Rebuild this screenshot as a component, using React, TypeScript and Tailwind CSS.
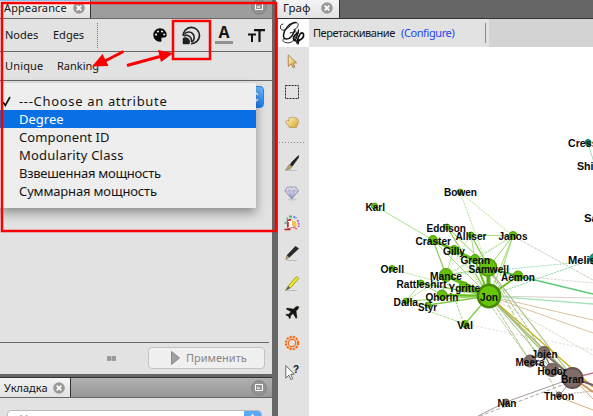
import React from 'react';

type NodeSpec = [string, number, number, number, number, number, number];

// name, node x, node y, radius, label x, label baseline, label width
const green: NodeSpec[] = [
  ['Bowen', 460, 192, 3.5, 444, 196, 33],
  ['Karl', 374.5, 206, 3.5, 365.5, 210.5, 19.5],
  ['Eddison', 447, 227, 3.5, 426.5, 231.5, 39.5],
  ['Alliser', 471, 235, 3.5, 455.5, 240, 31],
  ['Craster', 433, 240, 5, 415.5, 245, 35.5],
  ['Janos', 513, 235.5, 4.5, 498.5, 240, 29],
  ['Gilly', 454, 250, 5, 443, 255, 22],
  ['Grenn', 475, 259, 5, 460.5, 264, 29.5],
  ['Samwell', 488, 267.5, 9, 468.5, 272.5, 40.5],
  ['Orell', 392, 268.5, 3.5, 380.5, 273, 23.5],
  ['Mance', 446, 275, 7, 430, 280, 32],
  ['Rattleshirt', 421, 283, 3.5, 396.5, 288, 50],
  ['Ygritte', 464, 287, 5.5, 448.5, 292, 31.5],
  ['Aemon', 518, 276, 5.5, 501, 281, 34],
  ['Qhorin', 442, 295, 5.5, 425.5, 300.5, 33],
  ['Jon', 489, 296, 12, 480, 301, 18],
  ['Dalla', 406, 301, 3.5, 393.5, 306, 24.5],
  ['Styr', 428, 305, 3.5, 418, 311, 19],
  ['Val', 465, 324, 4, 457, 329, 16],
];

const brown: NodeSpec[] = [
  ['Jojen', 544, 352, 6, 531.5, 357.5, 26],
  ['Meera', 530, 361, 6.5, 515.5, 366, 29],
  ['Hodor', 552, 370, 7, 537.5, 374.5, 29],
  ['Bran', 572.5, 378, 10.5, 561, 383, 23],
  ['Theon', 559, 395, 3.5, 544, 400, 30],
  ['Nan', 506, 402, 3.5, 497.5, 407, 19],
];

const teal: NodeSpec[] = [
  ['Cressen', 588, 142.5, 3.5, 568, 147, 42],
  ['Shireen', 604, 165, 3, 577, 169.5, 39],
  ['Salladhor', 610, 218, 3, 584, 222, 52],
  ['Melisandre', 595, 259, 6, 568, 264, 58],
];

// x1, y1, x2, y2, colour, width, dash
const edges: [number, number, number, number, string, number, string?][] = [
  [460, 192, 513, 236, '#b5e78d', 1, '2 1'],
  [460, 192, 488, 268, '#b5e78d', 1, '2 1'],
  [375, 206, 433, 240, '#b0e385', 1],
  [447, 227, 489, 296, '#8fd354', 1.3],
  [447, 227, 489, 268, '#8fd354', 1],
  [471, 235, 489, 268, '#80c944', 1.2],
  [471, 235, 513, 236, '#a5dd7b', 1],
  [471, 235, 475, 260, '#a5dd7b', 1],
  [471, 235, 446, 275, '#c5e8ab', 1, '2 1'],
  [433, 240, 475, 260, '#62bb14', 3],
  [433, 240, 446, 275, '#8ed25a', 1.3],
  [433, 240, 489, 296, '#a3dc78', 1],
  [454, 250, 488, 268, '#66bd1c', 2.3],
  [454, 250, 446, 275, '#b2e18c', 1],
  [454, 250, 489, 296, '#a3dc78', 1, '2 1'],
  [475, 260, 489, 296, '#69bf1d', 2],
  [475, 260, 446, 275, '#b2e18c', 1, '2 1'],
  [475, 260, 513, 236, '#b2e18c', 1, '2 1'],
  [513, 236, 488, 268, '#9ad770', 1],
  [513, 236, 500, 276, '#9ad770', 1],
  [513, 236, 489, 296, '#a3dc78', 1],
  [513, 236, 446, 275, '#c5e8ab', 1, '2 1'],
  [513, 236, 593, 280, '#cfcab7', 1, '3 1'],
  [392, 269, 489, 296, '#b2e18c', 1, '2 1'],
  [446, 275, 488, 268, '#a3dc78', 1],
  [446, 275, 489, 296, '#64bb15', 4],
  [446, 275, 464, 324, '#a3dc78', 1, '3 1'],
  [446, 275, 442, 295, '#9ad770', 1],
  [446, 275, 406, 301, '#a3dc78', 1, '2 1'],
  [421, 283, 489, 296, '#84cc4b', 1.5],
  [421, 283, 442, 295, '#9ad770', 1],
  [464, 287, 489, 296, '#65bd17', 3],
  [442, 295, 489, 296, '#67bf1b', 2.3],
  [406, 301, 489, 296, '#8fd354', 1],
  [428, 305, 489, 296, '#80c944', 1.3],
  [406, 301, 428, 305, '#a3dc78', 1],
  [428, 311, 465, 324, '#a3dc78', 1, '3 1'],
  [465, 324, 489, 296, '#80cc47', 1.3],
  [421, 283, 406, 301, '#a3dc78', 1],
  [488, 268, 489, 296, '#55af0d', 4],
  [518, 276, 489, 296, '#69bf1d', 2],
  [488, 268, 518, 276, '#52b843', 2],
  [446, 275, 593, 261, '#9fdeb9', 1, '2 1'],
  [489, 296, 593, 259, '#82d9a2', 1, '2 1'],
  [518, 276, 593, 294, '#5bca73', 1.4],
  [518, 276, 593, 283, '#ddd9cd', 1, '3 1'],
  [489, 296, 593, 298, '#d7d1c5', 1],
  [489, 296, 593, 304, '#a7e4b8', 1.3],
  [489, 296, 593, 320, '#ddc2a1', 1],
  [489, 296, 593, 333, '#ddc2a1', 1],
  [489, 296, 593, 355, '#ddd9c6', 1, '3 1'],
  [465, 324, 593, 350, '#dbdad5', 1, '2 2'],
  [488, 268, 573, 378, '#a7bb83', 1.2],
  [488, 268, 544, 353, '#a3b980', 1, '3 1'],
  [489, 296, 573, 378, '#a6b878', 1.5],
  [489, 296, 552, 370, '#a3b980', 1],
  [489, 296, 544, 353, '#a3bd7a', 1.2],
  [489, 296, 530, 361, '#a3c180', 1, '4 1'],
  [488, 268, 559, 396, '#a4c97d', 1, '5 2'],
  [484, 296, 530, 361, '#b0c98c', 1, '4 1'],
  [489, 296, 593, 387, '#c4b323', 1.5],
  [544, 353, 552, 370, '#806c65', 1.3],
  [544, 353, 573, 378, '#7b6b67', 2],
  [544, 353, 530, 361, '#806c65', 1],
  [530, 361, 573, 378, '#806c65', 1.5],
  [530, 361, 552, 370, '#806c65', 1.5],
  [552, 370, 573, 378, '#79655f', 3],
  [573, 378, 559, 396, '#ab9e98', 1],
  [573, 378, 506, 402, '#a39b98', 1],
  [506, 402, 478, 416, '#a39b98', 1],
  [573, 381, 480, 416, '#b2aaa7', 1, '4 2'],
  [559, 395, 593, 391, '#b6afac', 1, '2 1'],
  [559, 397, 593, 410, '#d9ad7a', 1],
  [573, 378, 593, 373, '#c77788', 1.3],
  [573, 378, 593, 385, '#7c526a', 2],
  [573, 378, 593, 392, '#d49557', 2],
  [573, 378, 593, 399, '#d9a675', 1],
  [588, 143, 595, 166, '#9edfc2', 1],
];

function Group({ nodes, fill, stroke }: { nodes: NodeSpec[]; fill: string; stroke: string }) {
  return (
    <g>
      {nodes.map(([n, x, y, r]) => (
        <circle key={n} cx={x} cy={y} r={r - 0.5} fill={fill} stroke={stroke} strokeWidth={r > 8 ? 1.8 : 1} />
      ))}
    </g>
  );
}

function Graph() {
  return (
    <svg className="block" width="284" height="369" viewBox="309 47 284 369">
      {edges.map(([a, b, c, d, col, w, dash], i) => (
        <line key={i} x1={a} y1={b} x2={c} y2={d} stroke={col} strokeWidth={w} strokeDasharray={dash} />
      ))}
      <Group nodes={green} fill="#66c00a" stroke="#55a00c" />
      <circle cx="489" cy="296" r="11" fill="#66c70a" stroke="#458509" strokeWidth="2" />
      <Group nodes={brown} fill="#806c69" stroke="#645350" />
      <Group nodes={teal} fill="#159b78" stroke="#0c7d60" />
      <g fontFamily="'Liberation Sans', Arial, sans-serif" fontWeight="700" fontSize="11.2" fill="#080808">
        {[...green, ...brown, ...teal].map(([n, , , , x, y, w]) => (
          <text key={n} x={x} y={y} textLength={w} lengthAdjust="spacingAndGlyphs">{n}</text>
        ))}
      </g>
    </svg>
  );
}

function Close() {
  return (
    <svg width="12" height="12" viewBox="0 0 12 12">
      <circle cx="6" cy="6" r="5.8" fill="#999" />
      <path d="M3.7 3.7l4.6 4.6M8.3 3.7L3.7 8.3" stroke="#fff" strokeWidth="1.8" />
    </svg>
  );
}

function Minimize() {
  return (
    <svg width="16" height="16" viewBox="0 0 16 16">
      <circle cx="8" cy="8" r="7.3" fill="#939393" stroke="#818181" />
      <path d="M4.5 4.5h7v6h-7z" fill="none" stroke="#fff" />
      <path d="M6 8h3" stroke="#fff" strokeWidth="1.3" />
    </svg>
  );
}

function Palette() {
  return (
    <svg width="14" height="14" viewBox="0 0 14 14">
      <path d="M7 .3C3.300.3.3 3.300.3 7s3 6.700 6.700 6.700c1.300 0 1.800-.8 1.500-1.800-.5-1.400.1-2.300 1.400-2.300h1.600c1.300 0 2.200-1 2.200-2.500C13.700 3.200 10.700.3 7 .3z" fill="#080808" />
      <g fill="#e2e2e2"><circle cx="3" cy="6.700" r="1.100" /><circle cx="5" cy="3.500" r="1.100" /><circle cx="9" cy="3.500" r="1.100" /><circle cx="11.200" cy="6.500" r="1.100" /></g>
    </svg>
  );
}

function SizeIcon() {
  return (
    <svg width="19" height="19" viewBox="0 0 19 19" fill="none" stroke="#222">
      <path d="M1.300 10A8.100 8.100 0 1 1 9 17.600" strokeWidth="1.700" />
      <path d="M2.500 8.200A5.400 5.400 0 1 1 10 15.800" strokeWidth="1.600" />
      <path d="M2 10.200C5.500 7.800 10.500 11 9.300 16" strokeWidth="1.500" />
      <path d="M.700 17.500V13C.7 11.400 3 11 4.800 11.600 7 12.300 8 14 8 16.200c0 1.500-.8 2-1.800 2H1.500c-.5 0-.8-.2-.8-.7z" fill="#222" stroke="none" />
    </svg>
  );
}

function GephiLogo() {
  return (
    <svg className="h-7 w-[31px] shrink-0 bg-white" viewBox="0 0 31 28" fill="none" stroke="#111" strokeLinecap="round">
      <path d="M5 5C1 5 1.500 12 6 11c5-1 8-8 12-7.500 4 .5 2 6.500-2 7" strokeWidth=".9" />
      <path d="M18 3.500C11 3.500 6 11 5.500 16c-.3 5.500 5 5 8.500 1l3-6" strokeWidth="1.500" />
      <path d="M12 14c5-1 8-3 6.500 2-1.500 6-6.500 9-11 7.500-3.500-1-3.500-4-.5-4" strokeWidth=".9" />
      <path d="M20 14c-5 2-6 8-2 8 5 0 8.500-4 7.500-7-1.500-3-5 0-6.500 9" strokeWidth="1.700" />
      <path d="M20.500 11c-1 6-2.500 11-4.500 10M21 21l-1 4" strokeWidth="1.300" />
    </svg>
  );
}

const arrowShape = 'M2 1l9.500 8.200-4 .2 2.200 4-2 1-2.200-4.200L2 13z';

function Tools() {
  return (
    <svg className="block" width="31" height="369" viewBox="278 47 31 369">
      <defs>
        <linearGradient id="gold" x1="0" y1="0" x2="1" y2="1"><stop stopColor="#fff5c4" /><stop offset="1" stopColor="#d6a530" /></linearGradient>
        <linearGradient id="gem" x1="0" y1="0" x2="0" y2="1"><stop stopColor="#f5f5fd" /><stop offset="1" stopColor="#9798c5" /></linearGradient>
      </defs>
      <path transform="translate(286.500 54) scale(.87 .96)" d={arrowShape} fill="url(#gold)" stroke="#a17632" strokeWidth=".9" />
      <rect x="285.500" y="85.500" width="13" height="13" fill="none" stroke="#222" strokeDasharray="2 1" />
      <path d="M288.500 119.500c.2-2.500 2-2.500 2.700-1.300.5-1.500 2.500-1.500 3 0 .8-1 2.400-.5 2.500.8 1.300-.2 1.900.8 1.700 2l-.5 3-1.700 3.500h-7l-1-2.300-2.200-2c-1-1.600.2-3.300 2.500-2.200z" fill="url(#gold)" stroke="#a58240" strokeWidth=".8" strokeDasharray="1.500 .5" />
      <path d="M279 142.500h26" stroke="#888" strokeDasharray="1 2" />
      <g>
        <path d="M285 170.500h12" stroke="#bebebe" />
        <path d="M298.500 155.500l-7 7-1.500 3 2 1 6.500-9z" fill="#222" stroke="#222" strokeWidth=".7" />
        <path d="M289.500 164.500l2.500 2c-1 3-4 3-6.500 3.500 2-2 2-4 4-5.500z" fill="#b6a26a" stroke="#837249" strokeWidth=".5" />
      </g>
      <ellipse cx="292" cy="199.500" rx="4" ry="1" fill="#c8c8c8" />
      <path d="M287.500 187h8l3 4-6.800 8-6.800-8z" fill="url(#gem)" stroke="#8686a8" strokeWidth=".8" />
      <path d="M285 191h13.500M287.500 187l2 4 2.200 8 2.500-8 1.800-4M289.500 191l2-4 2.700 4" fill="none" stroke="#8c8ca8" strokeWidth=".5" />
      <g>
        <g fill="none" strokeWidth="2">
          <path d="M285.500 224v-3M286.500 219l1.500-1.500" stroke="#5fbfb0" strokeDasharray="2 .7" />
          <path d="M289 216.500h3" stroke="#3fba68" />
          <path d="M293.500 216.500l3 2" stroke="#5a84e8" strokeDasharray="2 .7" />
          <path d="M297.500 220l1 4v3" stroke="#b15ed2" strokeDasharray="2 .8" />
        </g>
        <path d="M287 221l5-2 1 8-5 2z" fill="#fff" stroke="#ad3030" strokeWidth=".8" />
        <path d="M284.500 229.500h6M287 220.500l5-1M288 222v5" stroke="#c22020" strokeWidth="1.500" />
        <path d="M291.500 219.500l5 1.500 1 5-3.500 2.500-2.500-3z" fill="#efc553" stroke="#fff" />
        <path d="M293 227l4 2" stroke="#e86a94" strokeWidth="1.500" />
      </g>
      <path d="M287 260.500h10M287 290.500h10" stroke="#bdbdbd" />
      <path d="M285.500 260l1.500-5 8.500-9 3.500 2.500-9.500 9z" fill="#292929" />
      <path d="M285.500 260l1.500-4.500 2.500 2z" fill="#bd9b71" />
      <path d="M285.500 290.500l3-5 8-9 2.300 2-8 9z" fill="#eee521" stroke="#99931b" strokeWidth=".8" />
      <path d="M285.500 290.500l3-4.500 1.500 2z" fill="#555" />
      <path d="M298.500 306.500c-1.500-1-3 .5-5 2.500l-6.500-1-1 1 5 2.800-2.500 2.500-2-.2-.8.8 2.600 1.300 1.200 2.600 1-.8v-2l2.600-2.400 2.900 5 1-1-.8-6.500c2-2 3.100-3.500 2.300-4.600z" fill="#17130e" stroke="#17130e" strokeWidth=".3" />
      <g fill="none" stroke="#fa6a14">
        <circle cx="292" cy="343" r="3.700" strokeWidth="1.200" />
        <circle cx="292" cy="343" r="6.100" strokeWidth="2.200" strokeDasharray="2.200 1" />
      </g>
      <path transform="translate(284 364.500) scale(.9 1.050)" d={arrowShape} fill="#fff" stroke="#555" strokeWidth=".9" />
      <text x="293" y="372.500" fontFamily="'Liberation Sans', sans-serif" fontWeight="700" fontSize="10" fill="#111">?</text>
    </svg>
  );
}

const items: [string, string][] = [
  ['---Choose an attribute', 'tracking-[0.67px]'],
  ['Degree', 'tracking-[0px]'],
  ['Component ID', 'tracking-[0.1px]'],
  ['Modularity Class', 'tracking-[0.22px]'],
  ['Взвешенная мощность', 'tracking-[-0.26px]'],
  ['Суммарная мощность', 'tracking-[-0.16px]'],
];

function Tab({ label, className }: { label: string; className: string }) {
  return (
    <div className={`flex shrink-0 items-center justify-between border-r border-[#333] bg-gradient-to-b from-[#f4f4f4] to-[#e2e2e2] ${className}`}>
      <span>{label}</span><Close />
    </div>
  );
}

export default function App() {
  return (
    <div className="relative flex h-[416px] w-[593px] overflow-hidden bg-[#666] font-['Noto_Sans','Open_Sans',sans-serif] text-[11px] leading-4 text-[#151515]">
      <aside className="flex w-[272px] shrink-0 flex-col">
        <section className="flex h-[374px] shrink-0 flex-col bg-[#e2e2e2]">
          <header className="flex h-[19px] shrink-0 border-b border-[#666] bg-[#9d9d9d]">
            <Tab label="Appearance" className="w-[91px] border-t border-t-[#8fc0f5] pr-[5px] pb-[3px] pl-1 tracking-[0.1px]" />
            <div className="flex flex-1 items-start justify-end pr-[5px]"><div className="-mt-px"><Minimize /></div></div>
          </header>
          <div className="flex h-[33px] shrink-0 items-center border-b border-[#666] pl-[5px]">
            <span className="w-12">Nodes</span>
            <span className="w-[44px]">Edges</span>
            <span className="h-[25px] border-l border-dotted border-[#777]" />
            <div className="ml-[55px] flex items-center">
              <Palette />
              <div className="ml-[15px]"><SizeIcon /></div>
              <div className="ml-[14px] flex w-[18px] flex-col items-center">
                <span className="h-[13px] font-['Open_Sans',sans-serif] text-[16px] leading-[13px] font-bold">A</span>
                <span className="mt-[2px] h-[3px] w-[18px] bg-[#929292]" />
              </div>
              <svg className="ml-[15px]" width="17" height="13" viewBox="0 0 17 13" fill="none" stroke="#111"><path d="M0 5.500h8M4 5v8" strokeWidth="2" /><path d="M6 1.200h11M11.500 1v12" strokeWidth="2.200" /></svg>
            </div>
          </div>
          <div className="flex h-[29px] shrink-0 items-center border-b border-[#666] pl-[5px]">
            <span className="w-[52px] tracking-[0.15px]">Unique</span><span>Ranking</span>
          </div>
          <div className="relative h-[261px] shrink-0">
            <div className="absolute top-[5px] left-[240px] flex h-[22px] w-[24px] items-center justify-end rounded-[4px] border border-[#2985e5] bg-gradient-to-b from-[#6bb8ff] to-[#147df3] pr-[4px]">
              <svg width="8" height="12" viewBox="0 0 8 12" fill="none" stroke="#fff" strokeWidth="1.600"><path d="M1 4l3-3 3 3M1 8l3 3 3-3" /></svg>
            </div>
            <ul className="absolute top-[2px] left-0 h-[125px] w-[256px] bg-[#eee] pt-[9px] text-[13px] leading-[18px] shadow-[0_5px_10px_rgba(0,0,0,0.38)]">
              {items.map(([label, track], i) => (
                <li key={label} className={`relative h-[18px] pl-[19px] whitespace-nowrap ${track} ${i === 1 ? 'bg-[#0870e2] text-white' : ''}`}>
                  {i === 0 && <svg className="absolute top-1 left-[2px]" width="9" height="11" viewBox="0 0 9 11"><path d="M1 6l2.300 3.500L8 1" fill="none" stroke="#111" strokeWidth="1.600" /></svg>}
                  {label}
                </li>
              ))}
            </ul>
          </div>
          <div className="mr-[3px] flex h-[32px] shrink-0 items-center border-t border-[#666] pl-[107px]">
            <svg width="9" height="5" viewBox="0 0 9 5"><rect width="4.300" height="5" rx="1" fill="#999" /><rect x="4.700" width="4.300" height="5" rx="1" fill="#999" /></svg>
            <button className="mt-[-2px] ml-8 flex h-[22px] w-[117px] items-center rounded-[4px] border border-[#c4c4c4] bg-[#f0f0f0] pl-[22px] text-[11px] text-[#888]">
              <svg width="9" height="14" viewBox="0 0 9 14"><path d="M.5.500l8 6.500-8 6.500z" fill="#a1a1a1" stroke="#888" /></svg>
              <span className="ml-[6px]">Применить</span>
            </button>
          </div>
        </section>
        <section className="mt-[3px] flex-1 bg-[#e2e2e2]">
          <header className="flex h-[21px] border-t border-b border-t-[#333] border-b-[#666] bg-gradient-to-b from-[#b0b0b0] to-[#979797]">
            <Tab label="Укладка" className="w-[71px] pr-[5px] pl-1" />
            <div className="flex flex-1 items-center justify-end pr-[5px]"><Minimize /></div>
          </header>
          <div className="mt-[12px] ml-[7px] flex h-[22px] w-[255px] overflow-hidden rounded-[4px] border border-[#bbb] bg-white">
            <span className="flex-1 pt-px pl-3 text-[12px] text-[#8b8b8b]">Укладка</span>
            <span className="flex w-[17px] justify-center bg-[#5caafb] pt-[3px]"><svg width="7" height="12" viewBox="0 0 7 12" fill="none" stroke="#fff"><path d="M1 4l2.500-3L6 4" strokeWidth="1.500" /></svg></span>
          </div>
        </section>
      </aside>
      <main className="ml-[4px] flex min-w-0 flex-1 flex-col">
        <header className="flex h-[19px] shrink-0 border-b border-[#333]">
          <Tab label="Граф" className="w-[64px] pr-[6px] pb-[2px] pl-[7px] text-[11.5px]" />
        </header>
        <div className="flex flex-1">
          <nav className="ml-[2px] flex w-[31px] shrink-0 flex-col bg-[#e2e2e2]"><GephiLogo /><Tools /></nav>
          <section className="flex-1 bg-white">
            <div className="flex h-7 bg-[#d3d3d3]">
              <div className="flex w-[180px] items-center bg-[#e2e2e2] pb-px pl-1">
                <span className="w-[88px] tracking-[-0.45px] whitespace-nowrap">Перетаскивание</span>
                <span className="w-[84px] tracking-[-0.4px] text-[#2345f5]">(Configure)</span>
                <span className="h-5 w-px bg-[#888]" />
              </div>
            </div>
            <Graph />
          </section>
        </div>
      </main>
      <svg className="pointer-events-none absolute inset-0" width="593" height="416" viewBox="0 0 593 416">
        <g fill="none" stroke="#fa0000">
          <rect x="2" y="3" width="274" height="228" strokeWidth="2.500" />
          <rect x="173" y="21" width="37" height="38" strokeWidth="2.500" />
          <path d="M123.500 51.500L104 61.500M127 65.500L160 56.500" strokeWidth="3" />
        </g>
        <path d="M92 66.500l10.500-12.500 6 12zM173.500 53l-15.500-3 3 12z" fill="#fa0000" />
      </svg>
    </div>
  );
}
